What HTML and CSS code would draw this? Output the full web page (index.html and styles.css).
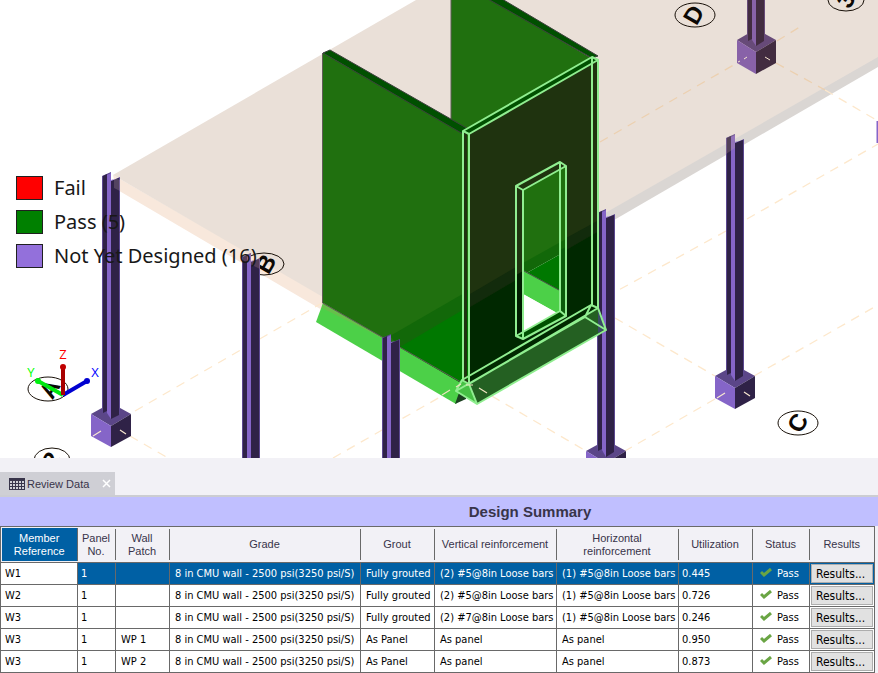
FILE: index.html
```
<!DOCTYPE html>
<html lang="en">

<head>
  <meta charset="UTF-8">
  <meta name="viewport" content="width=device-width, initial-scale=1.0">
  <title>Review Data</title>
  <link rel="stylesheet" href="styles.css">
</head>
<body>
  <main class="viewer">
    <svg class="scene" viewBox="0 0 878 458" role="img" aria-label="3D model view">
      <defs>
        <!-- column top and column foot, 0,0 is the front edge -->
        <g id="cap">
          <path fill="#5b4790" d="M-9 4 0 0V9L9 5V20H-9z" />
          <path fill="#2f2247" d="M-8 4-4 2V20H-8zM0 9 8 6V20H0z" />
          <path fill="#8565c8" d="M-4 3 0 1V8L4 7 0 9V20H-4z" />
        </g>
        <g id="cube">
          <path fill="#5b4688" d="M0-23 20-12 0 0-20-12z" />
          <path fill="#8565c8" d="M-20-12 0 0V21L-20 10z" />
          <path fill="#2f2247" d="M20-12 0 0V21L20 10z" />
        </g>
        <g id="ticks" stroke="#f8e8d0" stroke-width="1.2">
          <path d="M-18 10-10 5M9 4 15 8" />
        </g>
      </defs>

      <rect class="sky" width="878" height="458" />

      <!-- floor slab -->
      <path fill="#f8e8dc" d="M113 175 390 334V350L116 189z" />
      <path fill="#dad6d3" d="M390 334 878 55V67L390 350z" />
      <path fill="#eae0d8" d="M113 175 416 0H878V57L390 336z" />

      <!-- grid lines -->
      <g class="grid">
        <path d="M135 411 322 303M130 436 168 458M333 458 463 384M478 388 586 451M606 297 726 231M747 219 878 144M615 318 715 376M754 376 878 305M715 399 625 451M825 90 878 121" />
        <path class="tinted" d="M600 142 737 63M776 63 825 90M777 41 803 25" />
      </g>

      <!-- grid bubbles -->
      <g class="bubbles">
        <ellipse cx="48" cy="389" rx="20" ry="12" />
        <ellipse cx="264" cy="264" rx="20" ry="11" />
        <ellipse cx="695" cy="15" rx="20" ry="12" />
        <ellipse cx="846" cy="0" rx="18" ry="11" />
        <ellipse cx="798" cy="423" rx="20" ry="12" />
        <ellipse cx="52" cy="460" rx="18" ry="12" />
        <text transform="translate(50 389) rotate(-60)" y="8">A</text>
        <text transform="translate(266 264) rotate(-60)" y="8">B</text>
        <text transform="translate(694 15) rotate(-60)" y="8">D</text>
        <text transform="translate(846 0) rotate(-60)" y="8">3</text>
        <text transform="translate(798 423) rotate(-60)" y="8">C</text>
        <text transform="translate(52 460) rotate(-60)" y="8">2</text>
      </g>

      <!-- columns -->
      <g>
        <use href="#cube" x="111" y="426" />
        <use href="#ticks" x="111" y="426" />
        <path fill="#5b4790" d="M102 190H120V414L111 418 102 412z" />
        <path fill="#2f2247" d="M103 190H107V411L103 413zM111 190H119V415L111 419z" />
        <path fill="#8565c8" d="M107 190H111V419L107 413z" />
        <use href="#cap" x="111" y="172" />
        <path fill="#f8e0d0" fill-opacity=".18" d="M114 178 120 180V191L114 188z" />
      </g>
      <g>
        <path fill="#5b4790" d="M242 270H260V458H242z" />
        <path fill="#2f2247" d="M243 270H247V458H243zM251 270H259V458H251z" />
        <path fill="#8565c8" d="M247 270H251V458H247z" />
        <use href="#cap" x="251" y="253" />
        <path fill="#b08080" fill-opacity=".3" d="M242 256 251 253V262L260 258V269L242 260z" />
      </g>
      <g>
        <use href="#cube" x="735" y="388" />
        <use href="#ticks" x="735" y="388" />
        <path fill="#5b4790" d="M726 150H744V375L735 380 726 374z" />
        <path fill="#2f2247" d="M727 150H731V373L727 375zM735 150H743V376L735 381z" />
        <path fill="#8565c8" d="M731 150H735V381L731 375z" />
        <use href="#cap" x="735" y="134" />
        <path fill="#c0a090" fill-opacity=".25" d="M726 138 735 134V148L726 154z" />
      </g>
      <g>
        <use href="#cube" x="606" y="463" />
        <path fill="#5b4790" d="M597 224H615V450L606 456 597 450z" />
        <path fill="#2f2247" d="M598 224H602V449L598 451zM606 224H614V452L606 457z" />
        <path fill="#8565c8" d="M602 224H606V457L602 450z" />
        <use href="#cap" x="606" y="209" />
      </g>
      <g>
        <path fill="#674a78" d="M756 29 776 40 756 52 737 40z" />
        <path fill="#8862a8" d="M737 40 756 52V74L737 63z" />
        <path fill="#422c40" d="M776 40 756 52V74L776 63z" />
        <path fill="#674a78" d="M747 0H765V41L756 45 747 41z" />
        <path fill="#422c40" d="M748 0H752V39L748 41zM756 0H764V41L756 46z" />
        <path fill="#8862a8" d="M752 0H756V46L752 40z" />
        <path stroke="#f8e8d0" d="M738 62 740 61M744 59 747 57M765 57 770 60" />
      </g>
      <path fill="#8565c8" d="M876.500 121H878V143H876.500z" />

      <!-- left wall footing -->
      <path fill="#4cd048" d="M323 303 316 322 456 404 470 384z" />
      <path fill="#66c04a" d="M323 303 390 342 382 338V338L322 308z" />
      <path fill="#1b4020" d="M455 404 460 390 466 386V399z" />

      <!-- rear wall -->
      <path fill="#20700f" stroke="#605c58" d="M451 -2H489L593 59 598 180 451 250z" />
      <path fill="#005000" stroke="#3c403c" d="M488 -1H502L598 56 592 58z" />

      <!-- left wall -->
      <path fill="#20700f" d="M323 53 466 134V386L323 303z" />
      <path fill="#126809" d="M390 336 466 292V309L400 348z" />
      <path fill="#007800" d="M400 347 466 308V386z" />
      <path fill="none" stroke="#605c58" d="M322.500 53V303L466 385" />
      <path fill="#005000" stroke="#3c403c" d="M323 53 330 50 470 130 463 134z" />
      <g>
        <path fill="#5b4790" d="M382 350H400V458H382z" />
        <path fill="#2f2247" d="M383 350H387V458H383zM391 350H399V458H391z" />
        <path fill="#8565c8" d="M387 350H391V458H387z" />
        <use href="#cap" x="391" y="334" />
      </g>

      <!-- front wall, drawn round the door opening -->
      <path fill="#1f330f" fill-rule="evenodd" d="M463 131 592 57 599 60V308L463 386zM523 190V339L566 315V166z" />
      <path fill="#122b0c" d="M470 294 516 267V280L470 307zM566 238 599 220V231L566 250z" />
      <path fill="#002800" d="M470 307 516 280V337L523 340 566 316V250L599 231V309L470 384z" />
      <path fill="#20700f" d="M467 134H469V290H467z" />
      <path fill="#007800" d="M467 290H469V380H467z" />
      <path fill="#005000" d="M463 131 592 57 598 60 469 134z" />

      <!-- door opening -->
      <path fill="#20700f" d="M523 190 566 166V240L523 264z" />
      <path fill="#126809" d="M523 263 566 239V251L523 275z" />
      <path fill="#007800" d="M523 275 566 251V294H559L523 270z" />
      <path fill="#4cd048" d="M523 270 559 290V314L523 294z" />
      <path stroke="#4a4c48" d="M524 271 559 290" />
      <path fill="#fff" d="M523 294 555 312 523 332z" />
      <path fill="#0a5c0a" d="M560 250 566 247V315L560 311z" />
      <path fill="#1f330f" d="M516 186 560 162 566 166 523 190z" />
      <path fill="#005000" d="M516 336 560 311 566 316 523 339z" />
      <path fill="#001c00" d="M516 275 523 271V332L516 336z" />

      <!-- front wall footing -->
      <path fill="#246022" d="M469 384 598 308 606 330 477 404z" />
      <path fill="#3c4a68" d="M598 310 605 329 602 331 598 333z" />
      <path fill="#46c044" d="M462 380 469 384 477 404 456 391z" />

      <!-- selected panel outline -->
      <g class="outline">
        <path d="M463 131 592 57 598 60 469 134zM463 131V380M469 134V384M592 57V305M598 60V308" />
        <path d="M516 186 560 162 566 166 523 190zM516 186V336M523 190V339M560 162V311M566 166V316M516 336 560 311 566 316 523 339z" />
        <path d="M462 380 469 384 477 404 456 391zM591 305 598 308 606 330 585 317zM462 380 591 305M469 384 598 308M456 391 585 317M477 404 606 330" />
      </g>
      <path stroke="#f0e4c0" stroke-width="1.2" d="M442 395 450 390M456 387 461 384M466 385 473 385M479 388 487 393" />

      <!-- axis triad -->
      <g class="axes">
        <path stroke="#00e810" d="M63 395 38 381" />
        <path stroke="#0000d0" d="M63 395 87 381" />
        <path stroke="#a80000" d="M63 395V368" />
        <circle fill="#00f010" cx="38" cy="381" r="3" />
        <circle fill="#0000d0" cx="87" cy="381" r="3" />
        <circle fill="#c00000" cx="63" cy="367" r="3" />
        <text fill="#f00" x="63" y="359">Z</text>
        <text fill="#0f0" x="31" y="377">Y</text>
        <text fill="#00f" x="95" y="377">X</text>
      </g>
    </svg>

    <ul class="legend">
      <li><span class="swatch fail"></span>Fail</li>
      <li><span class="swatch pass"></span>Pass (5)</li>
      <li><span class="swatch pending"></span>Not Yet Designed (16)</li>
    </ul>
  </main>

  <section class="review">
    <div class="tabs">
      <div class="tab">
        <svg class="grid-icon" width="16" height="12" viewBox="0 0 16 12" aria-hidden="true">
          <path fill="#38344a" d="M0 0H16V12H0z" />
          <path fill="#cfcfd5" d="M1 3h2v2H1zM4 3h2v2H4zM7 3h2v2H7zM10 3h2v2h-2zM13 3h2v2h-2zM1 6h2v2H1zM4 6h2v2H4zM7 6h2v2H7zM10 6h2v2h-2zM13 6h2v2h-2zM1 9h2v2H1zM4 9h2v2H4zM7 9h2v2H7zM10 9h2v2h-2zM13 9h2v2h-2z" />
        </svg>
        <span>Review Data</span>
        <button class="close" type="button" aria-label="Close">
          <svg width="9" height="9" viewBox="0 0 9 9"><path stroke="#fff" stroke-width="1.500" d="M1 1 8 8M8 1 1 8" /></svg>
        </button>
      </div>
    </div>

    <h2 class="summary-title">Design Summary</h2>

    <table class="summary">
      <colgroup>
        <col class="c-member"><col class="c-panel"><col class="c-patch"><col class="c-grade"><col class="c-grout">
        <col class="c-bars"><col class="c-bars"><col class="c-util"><col class="c-status"><col class="c-results">
      </colgroup>
      <thead>
        <tr>
          <th class="active"><span>Member<br>Reference</span></th>
          <th><span>Panel<br>No.</span></th>
          <th><span>Wall<br>Patch</span></th>
          <th><span>Grade</span></th>
          <th><span>Grout</span></th>
          <th><span>Vertical reinforcement</span></th>
          <th><span>Horizontal<br>reinforcement</span></th>
          <th><span>Utilization</span></th>
          <th><span>Status</span></th>
          <th><span>Results</span></th>
        </tr>
      </thead>
      <tbody>
        <tr class="selected">
          <td>W1</td><td class="num">1</td><td></td>
          <td>8 in CMU wall - 2500 psi(3250 psi/S)</td><td>Fully grouted</td>
          <td>(2) #5@8in Loose bars</td><td>(1) #5@8in Loose bars</td><td class="num">0.445</td>
          <td class="status"><svg class="check" viewBox="0 0 12 9"><path d="M1 4 4 7 11 1" /></svg>Pass</td>
          <td class="action"><button type="button">Results...</button></td>
        </tr>
        <tr>
          <td>W2</td><td class="num">1</td><td></td>
          <td>8 in CMU wall - 2500 psi(3250 psi/S)</td><td>Fully grouted</td>
          <td>(2) #5@8in Loose bars</td><td>(1) #5@8in Loose bars</td><td class="num">0.726</td>
          <td class="status"><svg class="check" viewBox="0 0 12 9"><path d="M1 4 4 7 11 1" /></svg>Pass</td>
          <td class="action"><button type="button">Results...</button></td>
        </tr>
        <tr>
          <td>W3</td><td class="num">1</td><td></td>
          <td>8 in CMU wall - 2500 psi(3250 psi/S)</td><td>Fully grouted</td>
          <td>(2) #7@8in Loose bars</td><td>(1) #5@8in Loose bars</td><td class="num">0.246</td>
          <td class="status"><svg class="check" viewBox="0 0 12 9"><path d="M1 4 4 7 11 1" /></svg>Pass</td>
          <td class="action"><button type="button">Results...</button></td>
        </tr>
        <tr>
          <td>W3</td><td class="num">1</td><td>WP 1</td>
          <td>8 in CMU wall - 2500 psi(3250 psi/S)</td><td>As Panel</td>
          <td>As panel</td><td>As panel</td><td class="num">0.950</td>
          <td class="status"><svg class="check" viewBox="0 0 12 9"><path d="M1 4 4 7 11 1" /></svg>Pass</td>
          <td class="action"><button type="button">Results...</button></td>
        </tr>
        <tr>
          <td>W3</td><td class="num">1</td><td>WP 2</td>
          <td>8 in CMU wall - 2500 psi(3250 psi/S)</td><td>As Panel</td>
          <td>As panel</td><td>As panel</td><td class="num">0.873</td>
          <td class="status"><svg class="check" viewBox="0 0 12 9"><path d="M1 4 4 7 11 1" /></svg>Pass</td>
          <td class="action"><button type="button">Results...</button></td>
        </tr>
      </tbody>
    </table>
  </section>
</body>
</html>
```

FILE: styles.css
```
* {
  box-sizing: border-box;
}

body {
  margin: 0;
  background-color: #f2f1f6;
  color: #000;
  font-family: "DejaVu Sans Condensed", "DejaVu Sans", sans-serif;
  font-size: 11px;
}

/* 3D view */
.viewer {
  position: relative;
}

.scene {
  display: block;
  width: 100%;
}

.sky {
  fill: #fff;
}

.grid path {
  fill: none;
  stroke: #fde8cc;
  stroke-width: 1.3;
  stroke-dasharray: 9 7;
}

.grid .tinted {
  stroke: #ecd0b0;
}

.bubbles ellipse {
  fill: none;
  stroke: #181008;
}

.bubbles text {
  font-family: "Liberation Sans", sans-serif;
  font-size: 24px;
  font-weight: bold;
  text-anchor: middle;
  fill: #0c0804;
}

.outline path {
  fill: none;
  stroke: #90ee90;
  stroke-width: 2;
  stroke-linejoin: round;
}

.axes path {
  stroke-width: 4;
}

.axes text {
  font-family: "Open Sans", sans-serif;
  font-size: 13px;
  text-anchor: middle;
}

.legend {
  position: absolute;
  top: 176px;
  left: 16px;
  display: grid;
  gap: 10px;
  margin: 0;
  padding: 0;
  list-style: none;
  color: #181818;
  font-family: "Noto Sans", sans-serif;
  font-size: 20px;
  line-height: 24px;
}

.legend li {
  display: flex;
  gap: 11px;
}

.swatch {
  width: 27px;
  height: 24px;
  border: 1px solid #202020;
}

.fail {
  background-color: #f00;
}

.pass {
  background-color: #008000;
}

.pending {
  background-color: #9370db;
}

/* review data panel */
.tabs {
  padding-top: 14px;
  border-bottom: 2px solid #cccdd2;
}

.tab {
  display: flex;
  align-items: center;
  width: 115px;
  height: 23px;
  padding: 0 4px 0 9px;
  background-color: #cfcfd5;
  color: #38344a;
  font-family: "Liberation Sans", sans-serif;
  font-size: 11px;
  white-space: nowrap;
}

.tab span {
  margin-left: 2px;
}

.close {
  display: flex;
  margin-left: auto;
  padding: 0;
  border: 0;
  background: none;
}

.summary-title {
  height: 29px;
  margin: 0;
  padding-left: 182px;
  background-color: #c0bfff;
  color: #38344a;
  font-family: "Liberation Sans", sans-serif;
  font-size: 15px;
  line-height: 29px;
  text-align: center;
}

.summary {
  width: calc(100% - 3px);
  table-layout: fixed;
  border-collapse: collapse;
  border: 1px solid #696969;
}

.c-member { width: 77px; }
.c-panel { width: 38px; }
.c-patch { width: 54px; }
.c-grade { width: 191px; }
.c-grout { width: 74px; }
.c-bars { width: 122px; }
.c-util { width: 74px; }
.c-status { width: 57px; }
.c-results { width: 65px; }

.summary th {
  height: 35px;
  padding: 2px 0;
  color: #38344a;
  font-family: "Liberation Sans", sans-serif;
  font-size: 11px;
  font-weight: normal;
  line-height: 13px;
}

.summary th span {
  display: flex;
  align-items: center;
  justify-content: center;
  height: 31px;
  border-right: 1px solid #696969;
}

.summary th:last-child span {
  border-right: 0;
}

.summary .active {
  padding: 1px 0 1px 1px;
}

.summary .active span {
  height: 33px;
  background-color: #0060a4;
  color: #fff;
}

.summary td {
  height: 22px;
  padding: 0 0 0 5px;
  border: 1px solid #696969;
  background-color: #fff;
  white-space: nowrap;
}

.summary td:first-child {
  padding-left: 4px;
}

.summary .num {
  padding-left: 3px;
}

.summary .selected td:not(:first-child) {
  background-color: #0060a4;
  color: #fff;
}

.summary .status {
  padding-left: 7px;
}

.check {
  width: 12px;
  height: 9px;
  margin-right: 5px;
}

.check path {
  fill: none;
  stroke: #6aa544;
  stroke-width: 3;
}

.summary .action {
  padding: 1px;
}

.action button {
  display: block;
  width: 100%;
  height: 19px;
  padding: 0 4px;
  border: 1px solid #adadad;
  background-color: #e1e1e1;
  color: #000;
  font-family: inherit;
  font-size: 12px;
  text-align: left;
}
```
